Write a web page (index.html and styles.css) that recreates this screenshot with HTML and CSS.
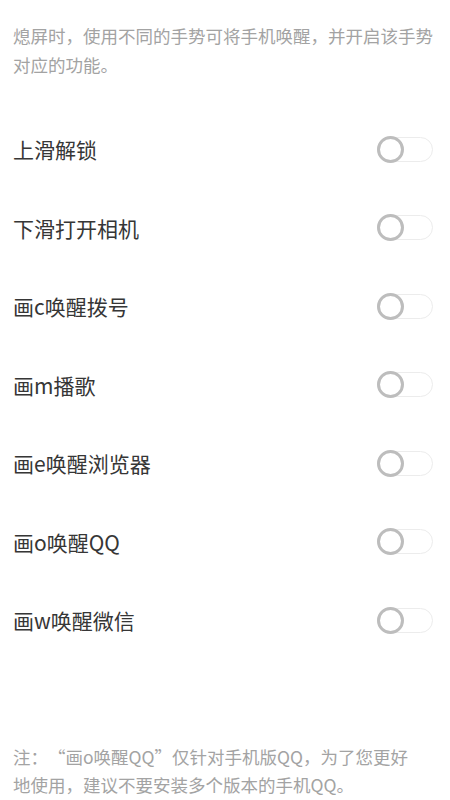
FILE: index.html
```html
<!DOCTYPE html>
<html lang="zh-CN">
<head>
<meta charset="utf-8">
<title>手势唤醒</title>
<link rel="stylesheet" href="styles.css">
</head>
<body>
<div class="page">
  <p class="intro">熄屏时，使用不同的手势可将手机唤醒，并开启该手势对应的功能。</p>
  <ul class="list">
    <li class="row"><span class="label">上滑解锁</span><span class="toggle"><span class="knob"></span></span></li>
    <li class="row"><span class="label">下滑打开相机</span><span class="toggle"><span class="knob"></span></span></li>
    <li class="row"><span class="label">画c唤醒拨号</span><span class="toggle"><span class="knob"></span></span></li>
    <li class="row"><span class="label">画m播歌</span><span class="toggle"><span class="knob"></span></span></li>
    <li class="row"><span class="label">画e唤醒浏览器</span><span class="toggle"><span class="knob"></span></span></li>
    <li class="row"><span class="label">画o唤醒QQ</span><span class="toggle"><span class="knob"></span></span></li>
    <li class="row"><span class="label">画w唤醒微信</span><span class="toggle"><span class="knob"></span></span></li>
  </ul>
  <p class="note">注：&#12288;“画o唤醒QQ”仅针对手机版QQ，为了您更好地使用，建议不要安装多个版本的手机QQ。</p>
</div>
</body>
</html>
```
FILE: styles.css
```css
html, body {
  margin: 0;
  padding: 0;
  background: #ffffff;
}
.page {
  width: 450px;
  height: 800px;
  overflow: hidden;
  font-family: "Noto Sans CJK SC", "Noto Sans", sans-serif;
}
.intro {
  margin: 0;
  padding: 21px 14px 0 13px;
  font-size: 17.5px;
  line-height: 29px;
  color: #a3a3a3;
}
.list {
  list-style: none;
  margin: 31px 0 0 0;
  padding: 0;
}
.row {
  height: 78.5px;
  display: flex;
  align-items: center;
  justify-content: space-between;
  padding: 0 17px 0 13px;
}
.label {
  font-size: 21px;
  color: #363636;
  line-height: 28px;
}
.toggle {
  width: 54px;
  height: 23px;
  border: 1px solid #ececec;
  border-radius: 13px;
  display: flex;
  align-items: center;
}
.knob {
  width: 27px;
  height: 27px;
  box-sizing: border-box;
  margin-left: -1px;
  border: 3px solid #bdbdbd;
  border-radius: 50%;
  background: #ffffff;
}
.note {
  margin: 83px 0 0 0;
  padding: 0 26px 0 13px;
  font-size: 17.5px;
  line-height: 28px;
  color: #a3a3a3;
}
```
